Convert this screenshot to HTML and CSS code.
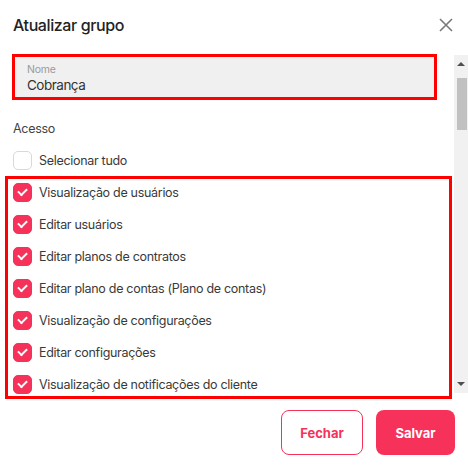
FILE: index.html
```html
<!DOCTYPE html>
<html lang="pt-BR">

<head>
    <meta charset="UTF-8">
    <meta name="viewport" content="width=device-width, initial-scale=1.0">
    <title>Atualizar grupo</title>
    <link rel="stylesheet" href="styles.css">
</head>

<body>
    <div class="modal">
        <div class="modal__header">
            <h2 class="modal__title">Atualizar grupo</h2>
            <button class="modal__close" aria-label="Fechar">
                <svg width="14" height="14" viewBox="0 0 14 14">
                    <path d="M1 1 L13 13 M13 1 L1 13" stroke="#7a7a7a" stroke-width="1.6" fill="none" />
                </svg>
            </button>
        </div>

        <div class="modal__body">
            <div class="modal__content">
                <div class="field">
                    <span class="field__label">Nome</span>
                    <span class="field__value">Cobrança</span>
                </div>

                <div class="section-title">Acesso</div>

                <label class="check check--all">
                    <span class="check__box"></span>
                    Selecionar tudo
                </label>

                <div class="check-list">
                    <label class="check"><span class="check__box check__box--on"></span>Visualização de usuários</label>
                    <label class="check"><span class="check__box check__box--on"></span>Editar usuários</label>
                    <label class="check"><span class="check__box check__box--on"></span>Editar planos de contratos</label>
                    <label class="check"><span class="check__box check__box--on"></span>Editar plano de contas (Plano de contas)</label>
                    <label class="check"><span class="check__box check__box--on"></span>Visualização de configurações</label>
                    <label class="check"><span class="check__box check__box--on"></span>Editar configurações</label>
                    <label class="check"><span class="check__box check__box--on"></span>Visualização de notificações do cliente</label>
                </div>
            </div>

            <div class="scrollbar">
                <span class="scrollbar__arrow scrollbar__arrow--up"></span>
                <span class="scrollbar__thumb"></span>
                <span class="scrollbar__track"></span>
                <span class="scrollbar__arrow scrollbar__arrow--down"></span>
            </div>
        </div>

        <div class="modal__footer">
            <button class="button button--outline">Fechar</button>
            <button class="button button--primary">Salvar</button>
        </div>
    </div>

    <script>
        // Toggle the checkboxes
        document.querySelectorAll('.check').forEach((item) => {
            item.addEventListener('click', () => {
                item.querySelector('.check__box').classList.toggle('check__box--on');
            });
        });
    </script>
</body>

</html>
```

FILE: styles.css
```css
:root {
    --color-primary: #f7325a;
    --color-text: #3a3a3a;
    --color-muted: #9a9a9a;
    --color-field: #f0f0f0;
    --color-mark: #ff0000;
}

body {
    margin: 0;
    font-family: 'Inter', 'Noto Sans', sans-serif;
    color: var(--color-text);
    background-color: #fff;
}

.modal {
    width: 468px;
    height: 465px;
    display: flex;
    flex-direction: column;
}

.modal__header {
    display: flex;
    justify-content: space-between;
    align-items: center;
    height: 54px;
    padding: 0 15px 4px 13px;
    box-sizing: border-box;
}

.modal__title {
    margin: 0;
    font-size: 16px;
    font-weight: 500;
    color: #222;
    letter-spacing: -0.4px;
}

.modal__close {
    border: none;
    background: none;
    padding: 0;
    width: 14px;
    height: 14px;
    cursor: pointer;
    display: flex;
}

.modal__body {
    display: flex;
    height: 346px;
}

.modal__content {
    flex: 1;
}

.field {
    display: flex;
    flex-direction: column;
    margin-left: 12px;
    width: 425px;
    height: 46px;
    box-sizing: border-box;
    border: 3px solid var(--color-mark);
    background-color: var(--color-field);
    padding: 6px 12px 0;
}

.field__label {
    font-size: 10.5px;
    line-height: 14px;
    color: var(--color-muted);
    letter-spacing: -0.2px;
}

.field__value {
    font-size: 13.5px;
    line-height: 17px;
    color: #333;
    letter-spacing: -0.5px;
}

.section-title {
    margin: 20px 0 0 13px;
    font-size: 12.5px;
    line-height: 17px;
    color: #444;
    letter-spacing: -0.3px;
}

.check {
    display: flex;
    align-items: center;
    gap: 7px;
    height: 32px;
    font-size: 12.5px;
    letter-spacing: -0.3px;
    color: var(--color-text);
    cursor: pointer;
    white-space: nowrap;
}

.check--all {
    margin: 7px 0 0 13px;
}

.check-list {
    margin-left: 5px;
    width: 447px;
    height: 223px;
    box-sizing: border-box;
    padding-left: 8px;
    overflow: hidden;
    outline: 3px solid var(--color-mark);
    outline-offset: -3px;
}

.check__box {
    width: 19px;
    height: 19px;
    box-sizing: border-box;
    border: 1px solid #d9d9d9;
    border-radius: 5px;
    background-color: #fff;
    display: flex;
    align-items: center;
    justify-content: center;
    flex-shrink: 0;
}

.check__box--on {
    border-color: var(--color-primary);
    background-color: var(--color-primary);
}

.check__box--on:before {
    content: '';
    width: 7px;
    height: 4px;
    border-left: 2.5px solid #fff;
    border-bottom: 2.5px solid #fff;
    transform: translate(0, -1px) rotate(-45deg);
}

.scrollbar {
    width: 14px;
    height: 338px;
    margin-top: 1px;
    background-color: #f1f1f1;
    display: flex;
    flex-direction: column;
    align-items: center;
}

.scrollbar__arrow {
    width: 0;
    height: 0;
    border-left: 4px solid transparent;
    border-right: 4px solid transparent;
}

.scrollbar__arrow--up {
    margin-top: 7px;
    border-bottom: 4px solid #505050;
}

.scrollbar__arrow--down {
    margin-bottom: 7px;
    border-top: 4px solid #505050;
}

.scrollbar__thumb {
    width: 10px;
    height: 52px;
    margin-top: 12px;
    margin-left: 2px;
    background-color: #c1c1c1;
}

.scrollbar__track {
    flex: 1;
}

.modal__footer {
    display: flex;
    justify-content: flex-end;
    gap: 13px;
    padding: 10px 13px 0;
}

.button {
    height: 45px;
    border-radius: 8px;
    font-family: 'Inter', sans-serif;
    font-size: 13px;
    font-weight: 700;
    cursor: pointer;
}

.button--outline {
    width: 82px;
    background-color: #fff;
    border: 1px solid var(--color-primary);
    color: var(--color-primary);
}

.button--primary {
    width: 79px;
    background-color: var(--color-primary);
    border: none;
    color: #fff;
}
```
